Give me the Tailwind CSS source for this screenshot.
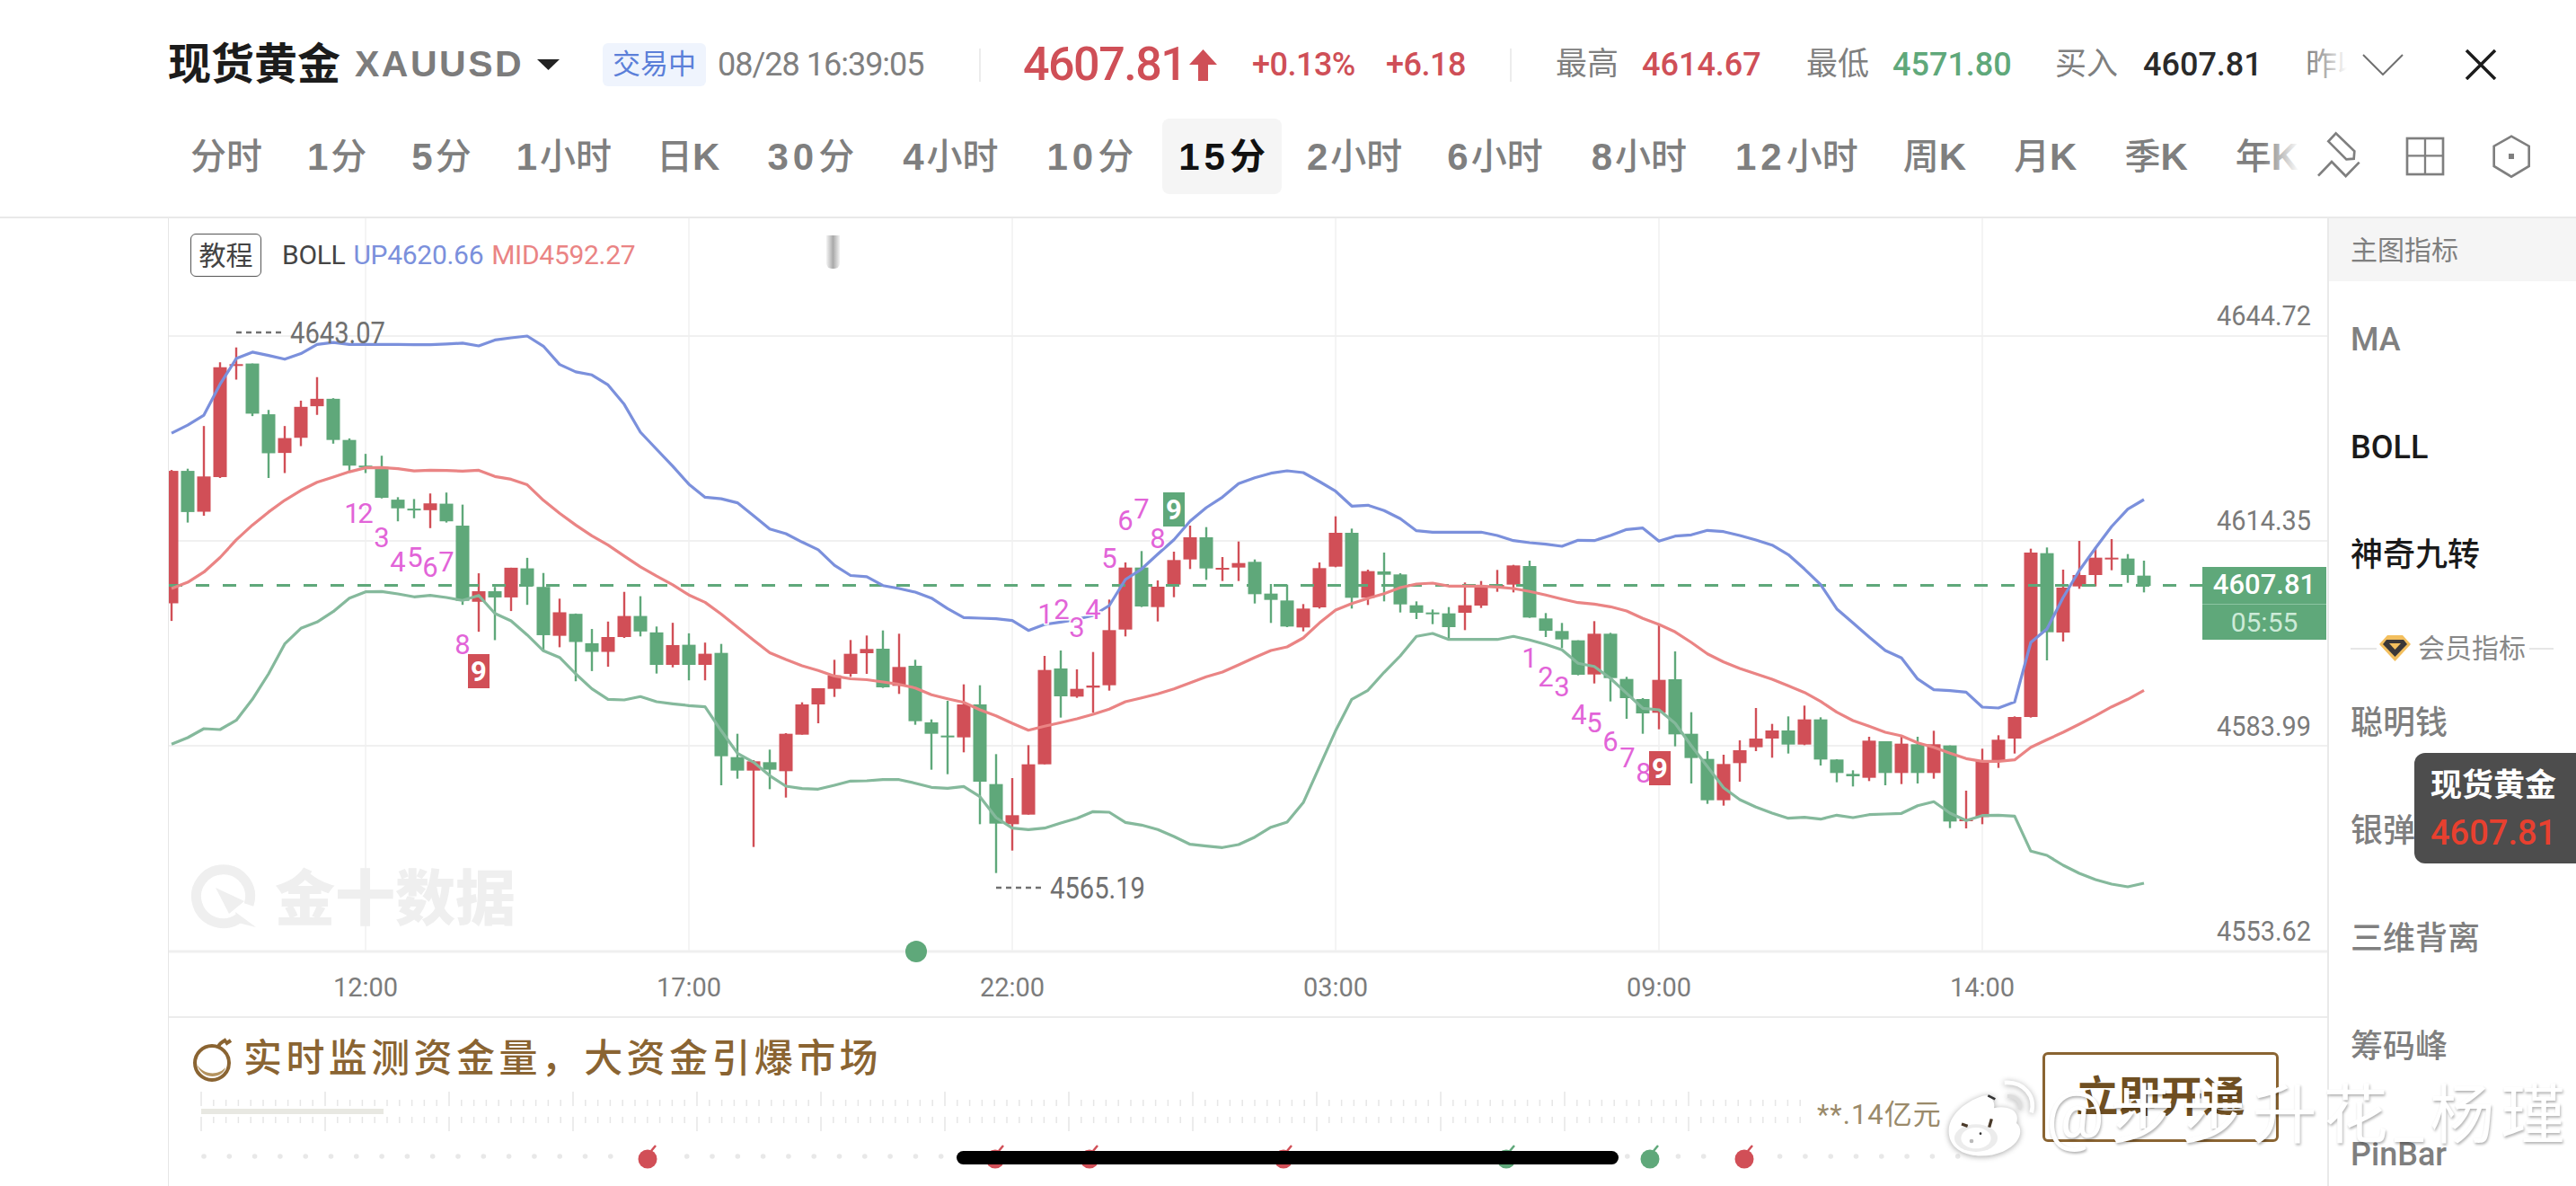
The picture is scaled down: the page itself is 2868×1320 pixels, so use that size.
<!DOCTYPE html>
<html lang="zh-CN">
<head>
  <meta charset="UTF-8" />
  <title>现货黄金 XAUUSD</title>
  <script src="https://cdn.jsdelivr.net/npm/@tailwindcss/browser@4"></script>
</head>
<body class="bg-white">
<div class="relative w-[2868px] h-[1320px] overflow-hidden bg-white text-[#7f7f7f] font-['Roboto','Noto_Sans_CJK_SC',sans-serif]">

  <!-- quote header -->
  <header class="flex items-center h-[132px] pt-[12px] pl-[187px] whitespace-nowrap">
    <span class="w-[208px] text-[48px] font-bold text-[#1c1c1c]">现货黄金</span>
    <span class="w-[203px] text-[41px] font-bold tracking-[2.5px] text-[#7c7c7c] font-['Liberation_Sans',sans-serif]">XAUUSD</span>
    <svg class="w-[25px] h-[12px]" viewBox="0 0 25 12"><path d="M0 0H25L12.5 12Z" fill="#222"/></svg>
    <span class="ml-[48px] flex items-center justify-center w-[115px] h-[48px] rounded-md bg-[#eff4fd] text-[31px] text-[#5b7fd9]">交易中</span>
    <span class="ml-[13px] w-[230px] text-[36px] tracking-[-1px] text-[#808080]">08/28 16:39:05</span>
    <span class="ml-[61px] w-[2px] h-[37px] bg-[#ececec]"></span>
    <span class="ml-[47px] w-[185px] text-[52px] font-medium tracking-[-1.5px] text-[#cf4f57]">4607.81</span>
    <svg class="w-[31px] h-[35px]" viewBox="0 0 31 35"><path d="M15.5 0L31 17H21V35H10V17H0Z" fill="#cf4f57"/></svg>
    <span class="ml-[39px] w-[149px] text-[36px] font-medium tracking-[-.5px] text-[#cf4f57]">+0.13%</span>
    <span class="w-[138px] text-[36px] font-medium tracking-[-.5px] text-[#cf4f57]">+6.18</span>
    <span class="w-[2px] h-[37px] bg-[#ececec]"></span>
    <span class="ml-[49px] w-[96px] text-[35px]">最高</span>
    <span class="w-[183px] text-[36px] font-medium text-[#cf4f57]">4614.67</span>
    <span class="w-[96px] text-[35px]">最低</span>
    <span class="w-[181px] text-[36px] font-medium text-[#5fa87a]">4571.80</span>
    <span class="w-[98px] text-[35px]">买入</span>
    <span class="w-[181px] text-[36px] font-medium text-[#2a2a2a]">4607.81</span>
    <span class="relative w-[46px] h-[50px] overflow-hidden text-[35px]">昨收<span class="absolute inset-0 bg-linear-to-r from-white/0 via-white/40 to-white"></span></span>
    <svg class="ml-[17px] w-[46px] h-[24px]" viewBox="0 0 46 24"><path d="M1 1L23 23L45 1" fill="none" stroke="#707070" stroke-width="2"/></svg>
    <svg class="ml-[68px] w-[36px] h-[34px]" viewBox="0 0 36 34"><path d="M2 1L34 33M34 1L2 33" fill="none" stroke="#1c1c1c" stroke-width="3.5"/></svg>
  </header>

  <!-- periods and tools -->
  <nav class="flex items-start h-[109px] pl-[194px]">
    <div class="relative flex gap-[14px] w-[2366px] overflow-hidden whitespace-nowrap text-[40px] font-medium font-['Liberation_Sans','Noto_Sans_CJK_SC',sans-serif]">
      <span class="flex items-center h-[84px] px-[18px]">分时</span>
      <span class="flex items-center h-[84px] px-[18px]"><b class="font-bold text-[42px] tracking-[3px]">1</b>分</span>
      <span class="flex items-center h-[84px] px-[18px]"><b class="font-bold text-[42px] tracking-[3px]">5</b>分</span>
      <span class="flex items-center h-[84px] px-[18px]"><b class="font-bold text-[42px] tracking-[3px]">1</b>小时</span>
      <span class="flex items-center h-[84px] px-[18px]">日<b class="font-bold text-[42px] tracking-[3px]">K</b></span>
      <span class="flex items-center h-[84px] pl-[18px] pr-[22px]"><b class="font-bold text-[42px] tracking-[5px]">30</b>分</span>
      <span class="flex items-center h-[84px] pl-[18px] pr-[22px]"><b class="font-bold text-[42px] tracking-[3px]">4</b>小时</span>
      <span class="flex items-center h-[84px] px-[18px]"><b class="font-bold text-[42px] tracking-[5px]">10</b>分</span>
      <span class="flex items-center h-[84px] px-[18px] rounded-lg bg-[#f5f5f5] text-[#111] font-bold"><b class="font-bold text-[42px] tracking-[5px]">15</b>分</span>
      <span class="flex items-center h-[84px] pl-[14px] pr-[18px]"><b class="font-bold text-[42px] tracking-[3px]">2</b>小时</span>
      <span class="flex items-center h-[84px] pl-[18px] pr-[22px]"><b class="font-bold text-[42px] tracking-[3px]">6</b>小时</span>
      <span class="flex items-center h-[84px] pl-[18px] pr-[22px]"><b class="font-bold text-[42px] tracking-[3px]">8</b>小时</span>
      <span class="flex items-center h-[84px] px-[18px]"><b class="font-bold text-[42px] tracking-[5px]">12</b>小时</span>
      <span class="flex items-center h-[84px] px-[18px]">周<b class="font-bold text-[42px] tracking-[3px]">K</b></span>
      <span class="flex items-center h-[84px] px-[18px]">月<b class="font-bold text-[42px] tracking-[3px]">K</b></span>
      <span class="flex items-center h-[84px] px-[18px]">季<b class="font-bold text-[42px] tracking-[3px]">K</b></span>
      <span class="flex items-center h-[84px] px-[18px]">年<b class="font-bold text-[42px] tracking-[3px]">K</b></span>
      <span class="absolute right-0 top-0 w-[40px] h-[84px] bg-linear-to-r from-white/0 to-white"></span>
    </div>
    <svg class="w-[280px] h-[90px] -mt-[2px]" viewBox="0 0 840 270" fill="none" stroke="#7f7f7f" stroke-width="8">
      <path d="M122 55L97 82L157 142L182 140L184 115Z"/>
      <path d="M63 197L108 150L155 198L200 152"/>
      <rect x="360" y="72" width="120" height="120"/>
      <path d="M360 130H480M420 72V192" stroke-width="7"/>
      <path d="M708 65L767 98V165L708 200L650 165V98Z"/>
      <rect x="699" y="123" width="18" height="18" fill="#7f7f7f" stroke="none"/>
    </svg>
  </nav>

  <main class="flex h-[1079px] border-t-2 border-[#e9e9e9]">
    <!-- chart column -->
    <section class="ml-[187px] w-[2404px] border-l border-[#e6e6e6]">
      <div class="relative h-[832px]">
        <svg id="chart" class="w-[2403px] h-[832px]" viewBox="188 243 2403 832"></svg>
        <div class="absolute flex items-center gap-[23px] left-[24px] top-[17px] whitespace-nowrap">
          <span class="flex items-center justify-center w-[79px] h-[48px] rounded-md border border-[#555] text-[30px] text-[#444]">教程</span>
          <span class="text-[30px] text-[#444] tracking-[-.3px] flex gap-[9px] -mt-[2px]"><span>BOLL</span><span class="text-[#7b90dc]">UP4620.66</span><span class="text-[#ea8484]">MID4592.27</span></span>
        </div>
        <span class="absolute left-[732px] top-[19px] w-[15px] h-[37px] rounded-b-md bg-linear-to-r from-[#f4f4f4] via-[#aaa] to-[#f4f4f4]"></span>
        <div class="absolute left-[2264px] top-[388px] w-[138px] h-[81px] bg-[#5fa87a] flex flex-col items-center text-[31px]">
          <span class="flex items-center justify-center w-full h-[42px] text-white font-medium border-b border-[#8cc4a2]">4607.81</span>
          <span class="flex items-center justify-center h-[39px] text-[#cdebd8] text-[30px]">05:55</span>
        </div>
      </div>

      <!-- time axis -->
      <div class="flex h-[56px] pl-[39px] pt-[3px] text-[29px] text-[#7c7c7c]">
        <span class="w-[360px] text-center">12:00</span>
        <span class="w-[360px] text-center">17:00</span>
        <span class="w-[360px] text-center">22:00</span>
        <span class="w-[360px] text-center">03:00</span>
        <span class="w-[360px] text-center">09:00</span>
        <span class="w-[360px] text-center">14:00</span>
      </div>

      <!-- promo -->
      <div class="flex h-[188px] border-t-2 border-[#ececec]">
        <div class="w-[2086px]">
          <div class="flex items-center h-[49px] mt-[21px] ml-[25px] whitespace-nowrap">
            <svg class="w-[47px] h-[50px]" viewBox="0 0 47 50">
              <circle cx="23" cy="29" r="19" fill="#fff" stroke="#8a6432" stroke-width="4"/>
              <path d="M6 30C12 42 30 44 38 34C36 46 12 50 6 30Z" fill="#b4935f"/>
              <path d="M30 11C32 6 36 5 39 3M38 8L44 4" fill="none" stroke="#8a6432" stroke-width="4"/>
            </svg>
            <span class="ml-[11px] text-[43px] font-medium tracking-[4.4px] text-[#8a6432]">实时监测资金量，大资金引爆市场</span>
          </div>
          <div class="flex items-center h-[48px] mt-[10px] ml-[24px]">
            <svg id="ruler" class="w-[1799px] h-[48px]" viewBox="0 0 1799 48"></svg>
            <span class="ml-[12px] mt-[8px] whitespace-nowrap text-[31px] tracking-[1px] text-[#9a8a6a]">**.14亿元</span>
          </div>
          <svg id="dots" class="mt-[8px] ml-[24px] w-[2000px] h-[36px]" viewBox="0 0 2000 36"></svg>
        </div>
        <button class="flex items-center justify-center mt-[38px] w-[263px] h-[100px] rounded-md border-[3px] border-[#8a6432] text-[47px] font-bold text-[#6f4f22]">立即开通</button>
      </div>
    </section>

    <!-- indicator sidebar -->
    <aside class="flex-1 border-l-2 border-[#e9e9e9] whitespace-nowrap text-[36px] font-medium">
      <div class="flex items-center h-[70px] pl-[24px] bg-[#f5f5f5] text-[30px] font-normal">主图指标</div>
      <div class="flex items-center h-[120px] mt-[5px] pl-[24px] text-[#808080]">MA</div>
      <div class="flex items-center h-[120px] pl-[24px] text-[#1a1a1a]">BOLL</div>
      <div class="flex items-center h-[120px] pl-[24px] text-[#1a1a1a]">神奇九转</div>
      <div class="flex items-center h-[67px] pt-[20px] pl-[24px] text-[30px] font-normal text-[#888]">
        <span class="w-[29px] h-[2px] bg-[#e6e6e6]"></span>
        <svg class="ml-[3px] w-[35px] h-[29px]" viewBox="0 0 35 29">
          <path d="M9 0H26L35 10L17.5 29L0 10Z" fill="#f3bf5e"/>
          <path d="M8 5H27L31 10L17.5 24L4 10Z" fill="#3b3838"/>
          <path d="M11 9H24L17.5 16Z" fill="#f3bf5e"/>
        </svg>
        <span class="ml-[8px]">会员指标</span>
        <span class="ml-[4px] w-[27px] h-[2px] bg-[#e6e6e6]"></span>
      </div>
      <div class="flex items-center h-[120px] pl-[24px]">聪明钱</div>
      <div class="flex items-center h-[120px] pl-[24px]">银弹</div>
      <div class="flex items-center h-[120px] pl-[24px]">三维背离</div>
      <div class="flex items-center h-[120px] pl-[24px]">筹码峰</div>
      <div class="flex items-center h-[120px] pl-[24px]">PinBar</div>
    </aside>
  </main>

  <!-- floating price card -->
  <div class="absolute right-0 top-[838px] flex flex-col w-[180px] h-[123px] pl-[18px] pt-[11px] rounded-l-xl bg-[#4d4d4d] whitespace-nowrap">
    <span class="text-[35px] leading-[52px] font-bold text-white">现货黄金</span>
    <span class="text-[38px] leading-[52px] font-medium text-[#e8402f]">4607.81</span>
  </div>

  <!-- home indicator -->
  <span class="absolute left-[1065px] top-[1281px] w-[737px] h-[15px] rounded-full bg-black"></span>

  <!-- repost watermark -->
  <svg class="absolute left-[2150px] top-[1190px] w-[120px] h-[105px] drop-shadow-[0_1px_3px_rgba(0,0,0,.35)]" viewBox="0 60 360 315">
    <path d="M60 280C50 220 110 170 170 150C200 140 215 170 210 190C250 180 300 195 285 240C310 260 300 310 240 335C170 365 70 350 60 280Z" fill="#fff"/>
    <ellipse cx="150" cy="290" rx="72" ry="46" fill="#ececec"/>
    <ellipse cx="150" cy="290" rx="50" ry="35" fill="#fff"/>
    <path d="M102 243L122 250M202 226L194 254" stroke="#4a3a2a" stroke-width="10"/>
    <path d="M190 148L214 160" stroke="#333" stroke-width="8"/>
    <circle cx="165" cy="275" r="4" fill="#333"/><circle cx="135" cy="300" r="7" fill="#bbb"/>
    <path d="M245 105C310 100 350 150 335 205" fill="none" stroke="#fff" stroke-width="14"/>
    <path d="M255 150C285 150 305 170 295 195" fill="none" stroke="#ddd" stroke-width="12"/>
  </svg>
  <span class="absolute left-[2278px] top-[1192px] text-[72px] leading-[100px] tracking-[7px] whitespace-nowrap text-white [text-shadow:1px_2px_3px_rgba(0,0,0,.3)]">@步步升花_杨瑾</span>
</div>

<script>
  const NS = "http://www.w3.org/2000/svg";
  const add = (parent, tag, attrs, text) => {
    const el = document.createElementNS(NS, tag);
    for (const k in attrs) el.setAttribute(k, attrs[k]);
    if (text) el.textContent = text;
    parent.appendChild(el);
    return el;
  };

  const UP = "#d14f57", DOWN = "#5fa87a";
  const X = i => 191 + 18 * i;
  const Y3 = v => 240 + v / 2.904, Y4 = v => 600 + v / 3, Y5 = v => 500 + v / 3, Y6 = v => 560 + v / 3;

  // candles: colour, wick top, body top, body bottom, wick bottom (read off the crops)
  const r = 1, g = 0;
  const parts = [
    [Y3, [[r,822,825,1253,1310],[g,818,825,958,992],[r,680,843,957,970],[r,474,490,845,848],[r,426,480,483,530],[g,478,478,640,648],[g,628,642,768,848],[r,680,719,767,832],[r,598,618,718,745],[r,522,592,616,644],[g,590,592,725,737],[g,720,725,808,828],[g,770,808,811,832],[g,776,812,912,914],[g,910,918,946,988],[g,916,947,951,978],[r,898,930,952,1010],[g,895,931,988,992],[g,934,1002,1245,1258],[r,1156,1214,1248,1345],[g,1200,1214,1234,1372],[r,1138,1138,1234,1278],[g,1106,1140,1198,1258],[g,1155,1200,1356,1405],[r,1238,1282,1358,1395],[g,1286,1287,1378,1505],[g,1336,1382,1410,1472],[r,1312,1362,1410,1458],[r,1216,1294,1362,1365],[g,1230,1294,1344,1360],[g,1328,1347,1452,1480],[r,1316,1388,1452,1460],[g,1350,1387,1452,1502],[r,1380,1416,1452,1502]]],
    [Y4, [[g,350,380,725,822],[g,650,728,773,800],[r,738,742,773,1028],[g,703,745,770,835],[r,648,650,775,863],[r,545,552,653,653],[r,498,498,552,615],[r,403,455,500,527],[r,337,383,450,460],[r,322,367,381,450],[g,305,366,495,497],[r,316,427,490,517],[g,403,423,608,620],[g,602,612,650,770],[g,540,656,661,785],[r,485,552,662,712],[g,488,552,810,952]]],
    [Y5, [[g,1018,1118,1250,1415],[r,1098,1222,1252,1340],[r,988,1052,1220,1220],[r,690,737,1052,1052],[g,672,732,825,896],[r,735,800,826,830],[r,677,789,796,880],[r,502,604,788,806],[r,378,395,602,625],[g,340,395,525,527],[r,438,459,527,575],[r,342,370,452,494],[r,255,294,368,400],[g,260,294,398,436],[r,360,396,398,440],[r,308,380,395,440],[g,368,376,484,515],[g,450,482,503,580],[g,452,505,592,594],[r,517,532,595,608],[r,378,397,528,532],[r,224,279,392,394],[g,265,279,496,532],[r,402,407,496,520],[g,345,408,419,508],[g,414,418,518,545],[g,508,521,546,567],[g,535,545,548,584],[g,527,548,594,634],[r,445,521,546,604],[r,440,457,522,530],[r,403,453,458,476],[r,386,388,452,478],[g,372,390,562,563]]],
    [Y6, [[g,367,385,426,447],[g,400,427,455,484],[g,458,458,573,575],[r,394,436,572,602],[g,433,436,584,662],[g,580,587,651,720],[g,651,654,702,770],[r,402,590,700,755],[g,495,588,772,812],[g,698,770,851,936],[g,828,854,992,1004],[r,840,871,992,1010],[r,792,825,868,930],[r,684,786,815,828],[r,737,759,786,850],[g,712,759,806,836],[r,676,722,806,808],[g,715,722,856,876],[g,855,856,901,932],[g,892,904,912,946],[r,780,793,917,928],[g,795,795,901,942],[r,780,803,901,938],[g,780,805,901,936],[r,760,805,901,920],[g,809,809,1063,1085],[r,960,1056,1062,1086],[r,820,860,1048,1072],[r,775,790,860,884],[r,712,714,786,836],[r,152,165,714,716],[g,148,167,431,525],[r,222,282,432,462],[r,126,240,278,286],[r,148,182,240,278],[r,120,182,185,224],[g,170,185,240,266],[g,192,242,276,298]]]
  ];

  const upper = [
    ...[703,677,645,545,462,441,452,464,446,416,410,416,416,416,416,417,417,415,412,421,402,395,389,422,481,505,515,547,610,700,755,810,868,910,915,928,970,1013,1028,1055,1080,1130,1163,1167].map(Y3),
    ...[155,165,177,197,232,262,264].map(Y4),
    ...[566,572,605,585,577,568,555,522,435,400,350,302,240,195,160,115,95,80,72,78,108,140,190,187,205,232,272,277,277,277,277,288,305,312].map(Y5),
    ...[137,144,124,125,108,88,83,127,110,106,91,95,108,123,140,172,220,272,353,400,447,492,517,587,623,626,631,681,684,664,465,420,315,225,150,78,20,-12].map(Y6)
  ];
  const mid = [
    ...[1205,1185,1152,1105,1048,1000,958,920,888,862,845,828,815,814,818,825,823,824,826,823,843,852,870,920,962,1000,1035,1065,1100,1135,1165,1193,1226,1250,1288,1330,1372,1413,1435,1455,1470,1488,1497,1500].map(Y3),
    ...[477,485,497,520,533,545,570].map(Y4),
    ...[890,915,938,925,913,900,885,868,843,830,817,800,780,760,744,720,695,672,660,630,580,537,515,498,482,462,450,447,457,457,457,460,465,475].map(Y5),
    ...[307,320,332,337,346,360,385,405,430,465,503,530,552,570,588,610,632,662,698,726,745,765,777,800,815,835,853,862,862,857,815,790,765,738,710,680,655,625].map(Y6)
  ];
  const lower = [
    ...[685,663,633,636,605,535,450,350,298,277,242,197,176,175,183,193,188,195,205,188,248,273,320,373,395,450,500,535,537,526,543,550,556,560,640,715,745,790,825,833,835,822,808,807,803,803,815,829,832,826,860].map(Y4),
    ...[1230,1265,1270,1265,1248,1232,1210,1212,1246,1255,1270,1293,1319,1325,1330,1320,1295,1262,1245,1180,1060,940,835,805,745,690,625,615,635,635,635,635,625,637].map(Y5),
    ...[472,490,535,545,585,635,685,690,735,810,880,950,990,1015,1035,1052,1049,1055,1042,1050,1040,1038,1036,1010,997,1035,1060,1043,1042,1045,1162,1176,1209,1236,1257,1272,1281,1269].map(Y6)
  ];

  const chart = document.getElementById("chart");

  // grid
  [374, 602, 830].forEach(y => add(chart, "line", { x1: 188, x2: 2591, y1: y, y2: y, stroke: "#ebebeb", "stroke-width": 1.5 }));
  [407, 767, 1127, 1487, 1847, 2207].forEach(x => add(chart, "line", { x1: x, x2: x, y1: 243, y2: 1059, stroke: "#f0f0f0", "stroke-width": 1.5 }));
  add(chart, "line", { x1: 188, x2: 2591, y1: 1059, y2: 1059, stroke: "#efefef", "stroke-width": 3 });

  // logo watermark
  add(chart, "path", { d: "M266 1022A30 30 0 1 1 277 1007", fill: "none", stroke: "#efefef", "stroke-width": 11 });
  add(chart, "path", { d: "M240 988L272 1003L255 1017ZM262 1015L285 1032L265 1027Z", fill: "#efefef" });
  add(chart, "text", { x: 306, y: 1024, "font-size": 67, "font-weight": 900, fill: "#efefef", "font-family": "Noto Sans CJK SC" }, "金十数据");

  // candles
  let idx = 0;
  parts.forEach(([toY, rows]) => rows.forEach(c => {
    const col = c[0] ? UP : DOWN, x = X(idx++);
    add(chart, "line", { x1: x, x2: x, y1: toY(c[1]), y2: toY(c[4]), stroke: col, "stroke-width": 2.4 });
    add(chart, "rect", { x: x - 7.5, y: toY(c[2]), width: 15, height: Math.max(toY(c[3]) - toY(c[2]), 2), fill: col });
  }));

  // last price line
  add(chart, "line", { x1: 188, x2: 2452, y1: 651.5, y2: 651.5, stroke: DOWN, "stroke-width": 3.2, "stroke-dasharray": "15 15" });

  // BOLL bands
  const band = (ys, col) => add(chart, "polyline", {
    points: ys.map((y, i) => X(i) + "," + y.toFixed(1)).join(" "),
    fill: "none", stroke: col, "stroke-width": 3.2, "stroke-linejoin": "round"
  });
  band(lower, "#85b99c");
  band(mid, "#ea8484");
  band(upper, "#7b90dc");

  // TD sequence numbers
  const seq = [[1,392,571],[2,407,571],[3,425,598],[4,443,625],[5,462,620],[6,479,631],[7,497,625],[8,515,717],
    [1,1164,683],[2,1182,678],[3,1199,698],[4,1217,678],[5,1235,621],[6,1253,579],[7,1271,566],[8,1289,599],
    [1,1703,732],[2,1721,753],[3,1739,764],[4,1758,795],[5,1775,804],[6,1793,825],[7,1812,843],[8,1830,860]];
  seq.forEach(([n, x, y]) => add(chart, "text", {
    x, y: y + 11, "text-anchor": "middle", "font-size": 31, "font-family": "Roboto", fill: "#e264d8",
    stroke: "#fff", "stroke-width": 3, "paint-order": "stroke"
  }, String(n)));
  [[521, 728, UP], [1295, 548, DOWN], [1836, 836, UP]].forEach(([x, y, col]) => {
    add(chart, "rect", { x, y, width: 24, height: 38, fill: col });
    add(chart, "text", { x: x + 12, y: y + 30, "text-anchor": "middle", "font-size": 31, "font-weight": 700, "font-family": "Roboto", fill: "#fff" }, "9");
  });

  // high / low marks
  const note = (x, y, label) => {
    add(chart, "line", { x1: x, x2: x + 55, y1: y, y2: y, stroke: "#707070", "stroke-width": 2.5, "stroke-dasharray": "6 5" });
    add(chart, "text", { x: x + 60, y: y + 12, "font-size": 33, "font-family": "Roboto", fill: "#707070", textLength: 106, lengthAdjust: "spacingAndGlyphs" }, label);
  };
  note(263, 370, "4643.07");
  note(1109, 988, "4565.19");

  // price axis
  [[362, "4644.72"], [590, "4614.35"], [819, "4583.99"], [1047, "4553.62"]].forEach(([y, label]) =>
    add(chart, "text", { x: 2573, y, "text-anchor": "end", "font-size": 32, "font-family": "Roboto", fill: "#7a7a7a", textLength: 105, lengthAdjust: "spacingAndGlyphs" }, label));

  add(chart, "circle", { cx: 1020, cy: 1059, r: 12, fill: DOWN });

  // capital flow ruler
  const ruler = document.getElementById("ruler");
  for (let i = 0; i <= 129; i++) {
    const x = 12 + i * 13.8, big = i % 10 === 0;
    add(ruler, "line", { x1: x, x2: x, y1: big ? 2 : 11, y2: 18, stroke: "#e6e6e6", "stroke-width": 1.5 });
    add(ruler, "line", { x1: x, x2: x, y1: 30, y2: big ? 46 : 37, stroke: "#e6e6e6", "stroke-width": 1.5 });
  }
  add(ruler, "rect", { x: 12, y: 21, width: 203, height: 6, fill: "#e8e8e2" });

  const dots = document.getElementById("dots");
  const bombs = { 721: UP, 1108: UP, 1213: UP, 1429: UP, 1677: DOWN, 1837: DOWN, 1942: UP };
  for (let x = 227; x < 2200; x += 28.3) {
    if (!Object.keys(bombs).some(b => Math.abs(b - x) < 20)) add(dots, "circle", { cx: x - 212, cy: 18, r: 2.8, fill: "#e8e8e8" });
  }
  Object.entries(bombs).forEach(([x, col]) => {
    add(dots, "circle", { cx: x - 212, cy: 21, r: 10.5, fill: col });
    add(dots, "path", { d: `M${x - 208} 12L${x - 203} 6`, stroke: col, "stroke-width": 2.5 });
  });
</script>
</body>
</html>
